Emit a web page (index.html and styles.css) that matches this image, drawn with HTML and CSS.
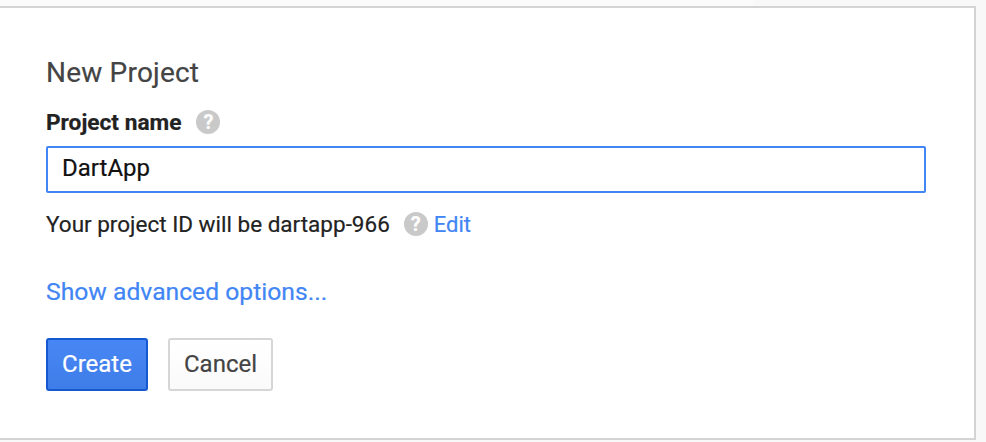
FILE: index.html
```html
<!DOCTYPE html>
<html lang="en">
<head>
<meta charset="utf-8">
<title>New Project</title>
<link rel="stylesheet" href="styles.css">
</head>
<body>
<div class="top-strip"><div class="top-strip-left"></div></div>
<main class="card">
  <h1 class="title">New Project</h1>
  <div class="label-row">
    <label class="label" for="name">Project name</label>
    <span class="help">?</span>
  </div>
  <input class="name-input" id="name" type="text" value="DartApp">
  <div class="id-row">
    <span>Your project ID will be dartapp-966</span>
    <span class="help help-id">?</span>
    <a class="link" href="#">Edit</a>
  </div>
  <a class="link advanced" href="#">Show advanced options...</a>
  <div class="actions">
    <button class="btn btn-primary" type="button">Create</button>
    <button class="btn btn-default" type="button">Cancel</button>
  </div>
</main>
</body>
</html>
```
FILE: styles.css
```css
* { box-sizing: border-box; }
html, body { margin: 0; padding: 0; }
body {
  width: 986px;
  height: 442px;
  overflow: hidden;
  background: #f8f8f8;
  font-family: Roboto, "Liberation Sans", sans-serif;
  color: #222;
  -webkit-text-stroke: 0.2px currentColor;
}
.top-strip { height: 6px; }
.top-strip-left { width: 754px; height: 6px; background: #fbfbfb; }
.card {
  width: 976px;
  height: 434px;
  background: #fff;
  border: 2px solid #d4d4d4;
  border-left: 0;
  padding: 49px 0 0 46px;
  display: flex;
  flex-direction: column;
  align-items: flex-start;
}
.title {
  margin: 0;
  font-size: 28px;
  letter-spacing: 0.2px;
  line-height: 32px;
  font-weight: 400;
  color: #444;
}
.label-row {
  display: flex;
  align-items: center;
  gap: 15px;
  margin-top: 20px;
  height: 26px;
}
.label { font-size: 22.7px; font-weight: 700; color: #222; }
.help {
  width: 24px;
  height: 24px;
  border-radius: 50%;
  background: #c9c9c9;
  color: #fff;
  font-size: 20px;
  font-weight: 700;
  line-height: 24px;
  text-align: center;
  flex: none;
}
.name-input {
  width: 880px;
  height: 47px;
  margin-top: 11px;
  border: 2px solid #4285f4;
  border-radius: 2px;
  padding: 0 15px 3px 14px;
  font: 400 24px Roboto, "Liberation Sans", sans-serif;
  color: #111;
  outline: none;
}
.id-row {
  display: flex;
  align-items: center;
  height: 26px;
  margin-top: 18px;
  font-size: 22.5px;
  color: #222;
}
.help-id { margin: 0 6px 0 14px; }
.link { color: #4285f4; text-decoration: none; font-size: 22px; }
.advanced { margin-top: 41px; font-size: 24.7px; line-height: 28px; }
.actions { display: flex; gap: 20px; margin-top: 32px; }
.btn {
  height: 53px;
  border-radius: 3px;
  font: 400 24px Roboto, "Liberation Sans", sans-serif;
  padding: 0 0 2px;
}
.btn-primary {
  width: 102px;
  background: linear-gradient(#4787f5, #3f7de8);
  border: 2px solid #1558d0;
  color: #fff;
}
.btn-default {
  width: 105px;
  background: linear-gradient(#fff, #fafafa);
  border: 2px solid #d6d6d6;
  color: #444;
}
```
